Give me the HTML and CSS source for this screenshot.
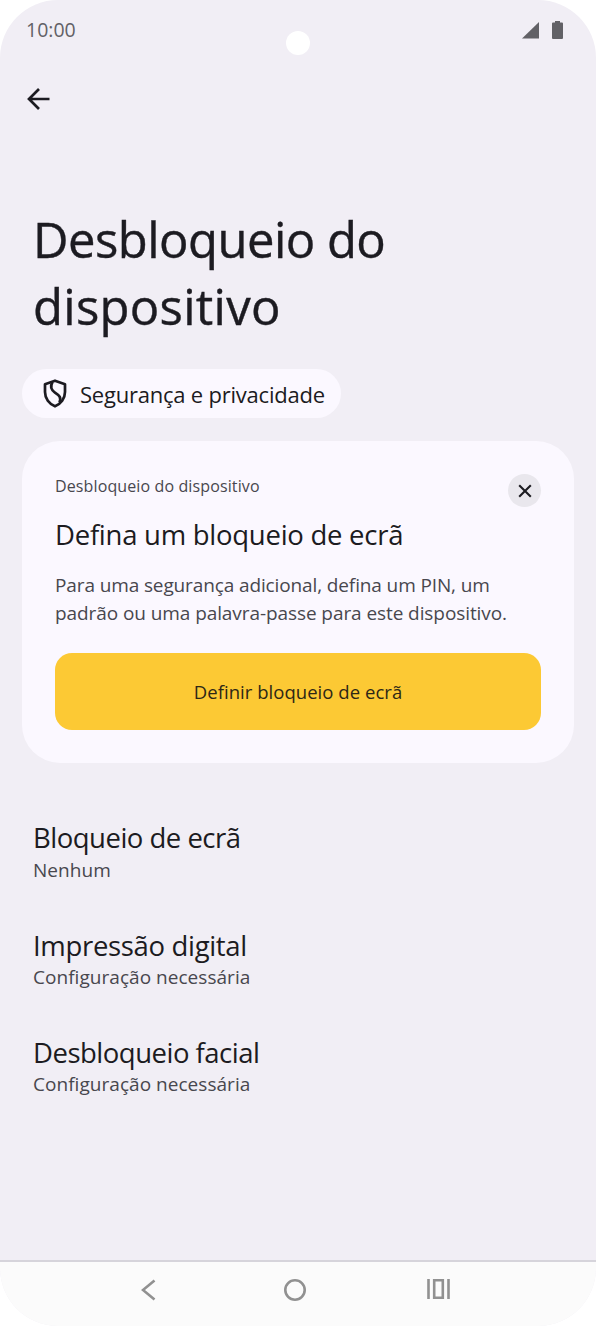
FILE: index.html
```html
<!DOCTYPE html>
<html lang="pt">
<head>
<meta charset="utf-8">
<title>Desbloqueio do dispositivo</title>
<link rel="stylesheet" href="styles.css">
</head>
<body>
<div class="phone">
  <header class="status">
    <span class="time">10:00</span>
    <span class="status-icons">
      <svg width="17" height="17" viewBox="0 0 17 17"><path d="M17 0V16.500H0Z"/></svg>
      <svg width="11" height="18" viewBox="0 0 11 18"><path d="M3 0H8V1.500H10Q11 1.500 11 2.500V17Q11 18 10 18H1Q0 18 0 17V2.500Q0 1.500 1 1.500H3Z"/></svg>
    </span>
    <span class="camera"></span>
  </header>
  <div class="toolbar">
    <svg width="23" height="22" viewBox="0 0 23 22"><path d="M12 1L2 11L12 21M2 11H22.500"/></svg>
  </div>
  <h1 class="heading"><span class="h-first">Desbloqueio do</span><br><span class="h-second">dispositivo</span></h1>
  <div class="chip">
    <svg width="24" height="29" viewBox="0 0 24 29"><path d="M12 1.700L22 5.200V13C22 19.500 17.800 25 12 27.300C6.200 25 2 19.500 2 13V5.200Z"/><path d="M9.500 3C7.200 7 7.600 10.500 12 13.600C16.500 16.500 18.500 18.500 16.500 23.500"/></svg>
    <span>Segurança e privacidade</span>
  </div>
  <section class="card">
    <div class="card-label">Desbloqueio do dispositivo</div>
    <h2 class="card-title">Defina um bloqueio de ecrã</h2>
    <p class="card-body"><span class="b-first">Para uma segurança adicional, defina um PIN, um</span><br><span class="b-second">padrão ou uma palavra-passe para este dispositivo.</span></p>
    <div class="button">Definir bloqueio de ecrã</div>
    <div class="close"><svg width="14" height="14" viewBox="0 0 14 14"><path d="M1.200 1.200L12.800 12.800M12.800 1.200L1.200 12.800"/></svg></div>
  </section>
  <div class="list">
    <div class="item"><div class="item-title t1">Bloqueio de ecrã</div><div class="item-sub s1">Nenhum</div></div>
    <div class="item"><div class="item-title t2">Impressão digital</div><div class="item-sub">Configuração necessária</div></div>
    <div class="item"><div class="item-title t3">Desbloqueio facial</div><div class="item-sub">Configuração necessária</div></div>
  </div>
  <nav class="nav">
    <svg class="back" width="15" height="22" viewBox="0 0 15 22"><path d="M13.500 1.500L2 11L13.500 20.500"/></svg>
    <svg class="home" width="22" height="22" viewBox="0 0 22 22"><circle cx="11" cy="11" r="9.700"/></svg>
    <svg class="recent" width="23" height="20" viewBox="0 0 23 20"><path d="M1.500 0V20M21.500 0V20M7.200 1.300H15.800V18.700H7.200Z"/></svg>
  </nav>
</div>
</body>
</html>
```
FILE: styles.css
```css
* { box-sizing: border-box; }
body { margin: 0; background: #fff; font-family: "Open Sans", "Noto Sans", sans-serif; font-variant-ligatures: none; color: #1c1b21; }
h1, h2, p { margin: 0; font-weight: 400; }
svg { display: block; flex: none; }
.phone { width: 596px; height: 1326px; border-radius: 58px; background: #f1eef5; overflow: hidden; display: flex; flex-direction: column; }
.status { position: relative; height: 60px; padding: 0 33px 0 26px; display: flex; justify-content: space-between; color: #626166; }
.time { font-size: 19.500px; line-height: 26px; padding-top: 17px; }
.status-icons { display: flex; gap: 13px; padding-top: 21px; }
.status-icons svg { fill: #626166; }
.status-icons svg:first-child { margin-top: 1px; }
.camera { position: absolute; left: 286px; top: 31px; width: 24px; height: 24px; border-radius: 50%; background: #fff; }
.toolbar { height: 145.500px; padding: 28px 0 0 27px; }
.toolbar svg { fill: none; stroke: #1c1b21; stroke-width: 2.700; }
.heading { padding-left: 33px; font-size: 49px; line-height: 67px; white-space: nowrap; -webkit-text-stroke: 0.4px #1c1b21; }
.h-first { letter-spacing: -0.540px; }
.h-second { letter-spacing: 0.280px; }
.chip { margin: 29.500px 0 0 22px; width: 319px; height: 49px; border-radius: 25px; background: #fbf8ff; display: flex; align-items: center; gap: 13px; padding-left: 21px; font-size: 22px; letter-spacing: -0.220px; white-space: nowrap; }
.chip svg { fill: none; stroke: #1c1b21; stroke-width: 2.700; stroke-linejoin: round; }
.card { position: relative; margin: 23px 22px 0; height: 322px; border-radius: 38px; background: #fbf8ff; padding: 34px 33px 33px; white-space: nowrap; }
.card-label { font-size: 16px; line-height: 22px; letter-spacing: 0.120px; color: #48474e; }
.card-title { margin-top: 20px; font-size: 27.500px; line-height: 36px; letter-spacing: -0.260px; }
.card-body { margin-top: 19px; font-size: 19px; line-height: 27.700px; color: #48474e; }
.b-first { letter-spacing: -0.120px; }
.b-second { letter-spacing: -0.080px; }
.button { margin-top: 25.600px; height: 77px; border-radius: 17px; background: #fcc934; color: #2d2716; display: flex; align-items: center; justify-content: center; font-size: 18.500px; letter-spacing: 0.040px; }
.close { position: absolute; right: 33px; top: 33px; width: 33px; height: 33px; border-radius: 50%; background: #e9e7ed; display: grid; place-items: center; }
.close svg { fill: none; stroke: #1c1b21; stroke-width: 2.100; }
.list { margin-top: 58.400px; padding-left: 33px; display: flex; flex-direction: column; gap: 45.900px; white-space: nowrap; }
.item-title { font-size: 27.500px; line-height: 34px; }
.t1 { letter-spacing: -0.500px; }
.t2 { letter-spacing: -0.330px; }
.t3 { letter-spacing: -0.500px; }
.item-sub { margin-top: 1.300px; font-size: 19px; line-height: 26px; letter-spacing: 0.040px; color: #48474e; }
.nav { margin-top: auto; height: 66px; border-top: 2px solid #d6d4db; background: #fbfbfb; display: flex; align-items: flex-start; padding: 17px 0 0 141px; }
.nav svg { fill: none; stroke: #919191; stroke-width: 2.600; }
.home { margin-left: 128px; }
.recent { margin-left: 121px; }
```
